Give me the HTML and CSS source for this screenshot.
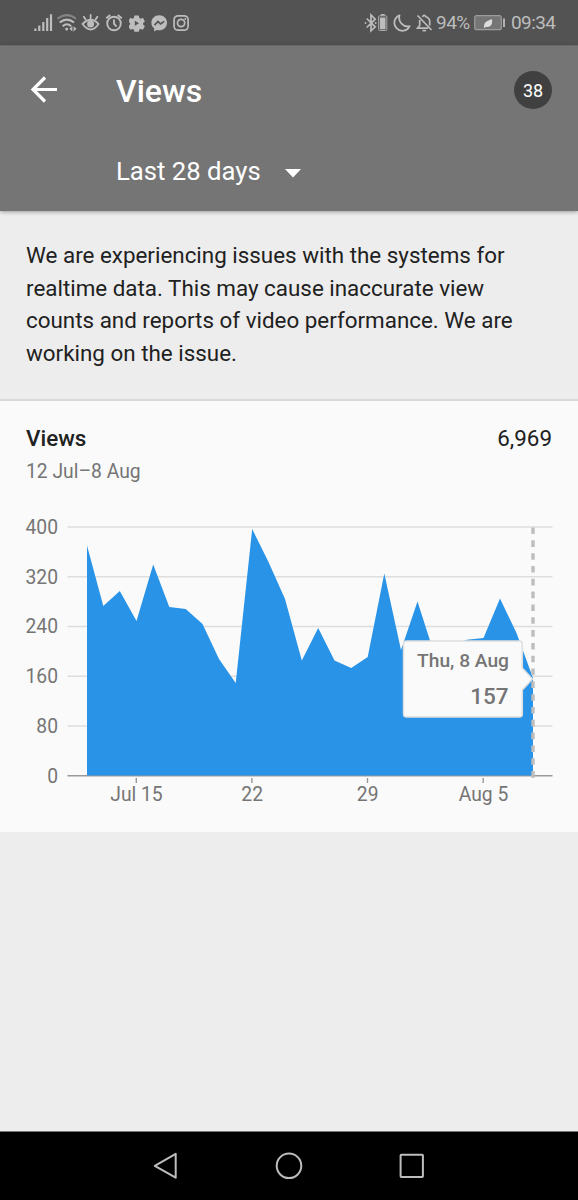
FILE: index.html
```html
<!DOCTYPE html>
<html lang="en">
<head>
<meta charset="utf-8">
<title>Views</title>
<link rel="stylesheet" href="styles.css">
</head>
<body>
<div class="screen">
  <div class="status">
    <div class="status-left">
      <svg width="19" height="20" viewBox="34 13 19 20"><path d="M35.4 28.5V31M39.3 25.5V31M43.3 22V31M47.2 18V31M51 14.3V31" stroke="#bdbdbd" stroke-width="2.2"/></svg>
      <svg width="22" height="20" viewBox="56 13 22 20" fill="none" stroke="#bdbdbd" stroke-width="2"><path d="M57.5 18.7Q67 11.5 76 18.7" stroke="#858585"/><path d="M59.7 22.6Q67 16.6 74 22.6M62.6 26.2Q67 22.4 71.2 26.2"/><circle cx="66.7" cy="29" r="1.5" fill="#bdbdbd" stroke="none"/><path d="M69.4 28.8l3-2.6v5.2zM76.6 28.8l-3-2.6v5.2z" fill="#bdbdbd" stroke="none"/></svg>
      <svg width="20" height="20" viewBox="81 13 20 20" fill="none" stroke="#bdbdbd" stroke-width="1.8" stroke-linecap="round"><path d="M82.5 24Q91 15.5 98.5 24Q91 35 82.5 24Z"/><path d="M90.6 18.2V15M85.6 19.5l-1.8-2.7M95.6 19.5l1.8-2.7"/><circle cx="90.6" cy="24" r="3.5" fill="#bdbdbd" stroke="none"/></svg>
      <svg width="18" height="20" viewBox="105 13 18 20" fill="none" stroke="#bdbdbd" stroke-width="1.9"><circle cx="114" cy="23.5" r="6.8"/><path d="M114 19.5v4.2l2.5 3M106.2 18.3l4-3.3M121.8 18.3l-4-3.3"/></svg>
      <svg width="16" height="20" viewBox="129 13 16 20" fill="#bdbdbd"><path d="M134.4 15.5h4.4l.6 2.5 1.3.7 2.2-.9 2 3.6-1.8 1.7v1.4l1.8 1.7-2 3.6-2.2-.9-1.3.7-.6 2.2h-4.4l-.6-2.2-1.3-.7-2.2.9-2-3.6 1.8-1.7v-1.4l-1.8-1.7 2-3.6 2.2.9 1.3-.7z"/><path d="M134.8 20.8v5l4.2-2.5z" fill="#535353"/></svg>
      <svg width="17" height="20" viewBox="151 13 17 20"><path d="M159.2 15.2c-4.5 0-7.8 3.3-7.8 7.5 0 2.4 1 4.3 2.7 5.6v3.1l2.7-1.5q1.2.4 2.4.4c4.5 0 7.8-3.3 7.8-7.6s-3.3-7.5-7.8-7.5z" fill="#bdbdbd"/><path d="M154.5 25.2l3.5-3.7 2.5 2.5 3.7-2.6" fill="none" stroke="#535353" stroke-width="1.7"/></svg>
      <svg width="16" height="20" viewBox="173 13 16 20" fill="none" stroke="#bdbdbd" stroke-width="1.7"><rect x="174.1" y="15.8" width="14" height="14.4" rx="4"/><circle cx="181.1" cy="23" r="3.6"/><circle cx="185.2" cy="19" r=".9" fill="#bdbdbd" stroke="none"/></svg>
    </div>
    <div class="status-right">
      <svg width="24" height="20" viewBox="364 13 24 20" fill="none" stroke="#bdbdbd"><path d="M366.7 18.5l8.5 8.3-4.2 4V15l4.2 4.2-8.5 8.3" stroke-width="1.7"/><circle cx="365.5" cy="23" r=".9" fill="#bdbdbd" stroke="none"/><circle cx="375.7" cy="23" r=".9" fill="#bdbdbd" stroke="none"/><rect x="378.6" y="15.8" width="8.2" height="14.7" rx="1" stroke-width=".8"/><path d="M380.8 14.8h4" stroke-width="1.5"/><path d="M379.9 17.5h5.6v11.8h-5.6z" fill="#bdbdbd" stroke="none"/></svg>
      <svg class="moon" width="18" height="20" viewBox="393 13 18 20"><path d="M399.5 15.3A8 8 0 1 0 409.6 26.2A8.7 8.7 0 0 1 399.5 15.3Z" fill="none" stroke="#bdbdbd" stroke-width="1.8" stroke-linejoin="round"/></svg>
      <svg class="bell" width="17" height="20" viewBox="416 13 17 20" fill="none" stroke="#bdbdbd" stroke-width="1.7"><path d="M417.5 15.5l14 14.5M422.5 16.8Q424 14 426 16.8Q430 18.3 429.7 22v3.5M419.7 20v5.5L417.5 28.2h10.5"/><path d="M422.5 30.6h3.6"/></svg>
      <span class="battery-text">94%</span>
      <svg class="battery" width="32" height="20" viewBox="474 13 32 20"><rect x="474.7" y="15.7" width="26.6" height="14" rx="2" fill="#757575" stroke="#9c9c9c" stroke-width="1.2"/><path d="M504 18.5v8.5" stroke="#bdbdbd" stroke-width="1.8"/><path d="M484 27.5q-.5-5 3.500-6.500 2-.8 4.500-2 .8 6-2.500 7.600-2 1-3.700-.1L485 28z" fill="#ddd"/></svg>
      <span class="clock">09:34</span>
    </div>
  </div>
  <header class="appbar">
    <div class="title-row">
      <svg class="back" width="28" height="28" viewBox="30 76 28 28"><path d="M57 89.500H33M45 77.500L33 89.500L45 101.500" fill="none" stroke="#fff" stroke-width="3.200"/></svg>
      <h1>Views</h1>
      <span class="avatar">38</span>
    </div>
    <div class="period"><span>Last 28 days</span><svg width="16" height="9" viewBox="0 0 16 9"><path d="M0 0h16L8 8.500z" fill="#fff"/></svg></div>
  </header>
  <p class="notice">We are experiencing issues with the systems for<br>realtime data. This may cause inaccurate view<br>counts and reports of video performance. We are<br>working on the issue.</p>
  <section class="card">
    <div class="card-head"><h2>Views</h2><span class="total">6,969</span></div>
    <div class="range">12 Jul–8 Aug</div>
    <svg class="chart" width="578" height="332" viewBox="0 500 578 332">
      <path d="M67.500 527H552.500M67.500 576.800H552.500M67.500 626.500H552.500M67.500 676.200H552.500M67.500 726H552.500" stroke="#dedede" stroke-width="1.500"/>
      <path d="M67.500 775.700H552.500" stroke="#999" stroke-width="1.400"/>
      <path d="M87 775.500V545.500L103.300 606L119.800 591L136.500 621L153.200 564.500L169.300 607L185.700 609L202.500 624L219 659L235.700 683L252.200 529L268.500 562L285 599L301.800 660.500L318.200 628L334.500 660.500L351.200 668L367.700 657L384.300 573.500L401 650L417.500 601.500L434 653L450.500 645L467 639.700L483.500 638L500 598.500L516.500 633L533 678V775.500Z" fill="#2893e7"/>
      <path d="M136.300 778v5M251.900 778v5M367.500 778v5M483.200 778v5" stroke="#999" stroke-width="1.400"/>
      <path d="M533 527.500V778" stroke="#bdbdbd" stroke-width="3.400" stroke-dasharray="6.600 6.220"/>
      <path class="tip" d="M406.500 641H519.500Q522.300 641 522.300 643.800V668L532.500 679L522.300 690V714Q522.300 717 519.500 717H406.500Q403.500 717 403.500 714V644Q403.500 641 406.500 641Z"/>
      <g class="ylabels"><text x="58" y="534">400</text><text x="58" y="583.700">320</text><text x="58" y="633.400">240</text><text x="58" y="683.200">160</text><text x="58" y="733">80</text><text x="58" y="782.700">0</text></g>
      <g class="xlabels"><text x="136.500" y="801">Jul 15</text><text x="252.200" y="801">22</text><text x="367.700" y="801">29</text><text x="483.500" y="801">Aug 5</text></g>
      <text class="tip-date" x="509" y="667">Thu, 8 Aug</text>
      <text class="tip-value" x="508.500" y="704">157</text>
    </svg>
  </section>
  <nav class="navbar">
    <svg width="24" height="28" viewBox="153 1152 24 28"><path d="M175.700 1153.800V1177.700L154.800 1165.800Z"/></svg>
    <svg width="28" height="28" viewBox="275 1152 28 28"><circle cx="289" cy="1165.800" r="12.300"/></svg>
    <svg width="26" height="28" viewBox="399 1152 26 28"><rect x="400.600" y="1154.700" width="22.300" height="22.300" rx=".7"/></svg>
  </nav>
</div>
</body>
</html>
```
FILE: styles.css
```css
* { box-sizing: border-box; }
body { margin: 0; font-family: Roboto, "Liberation Sans", sans-serif; }
svg { display: block; flex: none; }
h1, h2, p { margin: 0; font-weight: 500; }
.screen { width: 578px; height: 1200px; background: #ededed; display: flex; flex-direction: column; overflow: hidden; }
.status { height: 45px; flex: none; background: #535353; color: #bdbdbd; display: flex; justify-content: space-between; padding: 13px 22px 12px 34px; }
.status-left { display: flex; gap: 3px; }
.status-left svg:nth-child(4) { margin-left: 1px; }
.status-left svg:nth-child(n+5) { margin-left: 3px; }
.status-left svg:nth-child(7) { margin-left: 2px; }
.status-right { display: flex; font-size: 19px; line-height: 20px; }
.moon { margin-left: 5px; }
.bell { margin-left: 5px; }
.battery-text { width: 35px; margin-left: 3px; white-space: nowrap; letter-spacing: -0.5px; }
.battery { margin-left: 3px; }
.clock { width: 45px; margin-left: 5px; white-space: nowrap; letter-spacing: -0.6px; }
.appbar { height: 166px; flex: none; background: #757575; color: #fff; border-top: 1px solid #696969; box-shadow: 0 1px 4px rgba(0, 0, 0, .35); }
.title-row { display: flex; align-items: center; height: 88px; padding: 0 26px 0 30px; }
.title-row h1 { margin: 2px 0 0 58px; font-size: 32px; line-height: 38px; }
.avatar { width: 38px; height: 38px; margin-left: auto; border-radius: 50%; background: #404040; font-size: 18px; line-height: 39px; text-align: center; }
.period { display: flex; align-items: center; padding-left: 116px; gap: 25px; font-size: 25.7px; line-height: 32px; margin-top: 21px; }
.period span { width: 144px; white-space: nowrap; }
.period svg { margin-top: 5px; }
.notice { height: 190px; flex: none; padding: 27.8px 26px 0; border-bottom: 2px solid #d9d9d9; font-size: 22.4px; font-weight: 400; line-height: 32.7px; color: #212121; white-space: nowrap; }
.card { height: 431px; flex: none; background: #fafafa; color: #212121; }
.card-head { display: flex; justify-content: space-between; padding: 23px 26px 0; line-height: 28px; font-size: 22.4px; }
.card-head h2 { font-size: 22.4px; }
.range { padding: 8px 26px 0; height: 48px; font-size: 19.3px; line-height: 24px; color: #757575; }
.chart { font-size: 19.3px; fill: #757575; }
.ylabels, .tip-date, .tip-value { text-anchor: end; }
.xlabels { text-anchor: middle; }
.tip { fill: #fafafa; stroke: #dedede; stroke-width: 1.5px; }
.tip-date { font-size: 19.2px; font-weight: 500; }
.tip-value { font-size: 22.5px; font-weight: 500; }
.navbar { height: 69px; margin-top: auto; flex: none; background: #000; border-top: 1px solid #777; display: flex; padding: 20px 0 0 153px; }
.navbar svg { fill: none; stroke: #bdbdbd; stroke-width: 2px; stroke-linejoin: round; }
.navbar svg:nth-child(2) { margin-left: 98px; }
.navbar svg:nth-child(3) { margin-left: 96px; }
```
